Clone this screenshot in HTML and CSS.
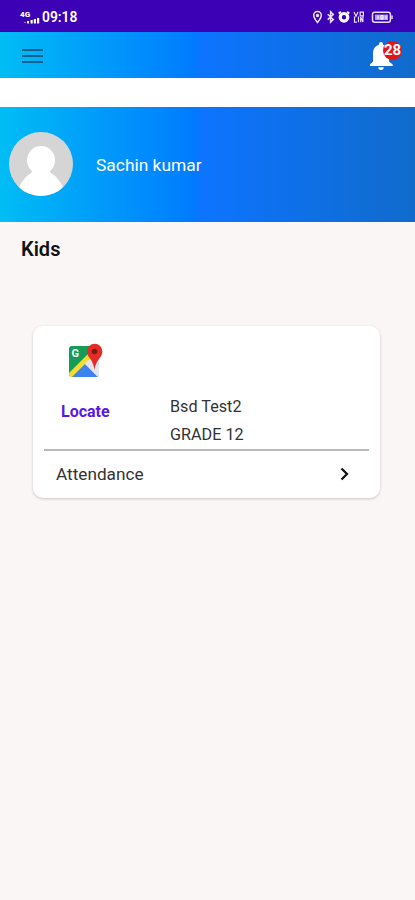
FILE: index.html
```html
<!DOCTYPE html>
<html lang="en">
<head>
  <meta charset="UTF-8" />
  <meta name="viewport" content="width=device-width, initial-scale=1.0"/>
  <title>Kids</title>
  <link rel="stylesheet" href="styles.css">
</head>
<body>

  <!-- Status bar -->
  <div class="status-bar">
    <div class="signal">
      <span class="network">4G</span>
      <svg width="16" height="6" viewBox="0 0 16 6" fill="#fff">
        <rect x="0" y="4" width="2" height="1" opacity=".5"/>
        <rect x="3" y="3" width="2" height="2.5"/>
        <rect x="6.5" y="2" width="2.2" height="3.5"/>
        <rect x="9.8" y="1" width="2.2" height="4.5"/>
        <rect x="13" y="0" width="2.2" height="5.5"/>
      </svg>
    </div>
    <span class="time">09:18</span>
    <svg class="status-icons" width="82" height="14" viewBox="0 0 82 14" fill="none" stroke="#e9defa" stroke-width="1.5">
      <path d="M5.5 12.5C3 9.5 1.7 7.4 1.7 5.3a3.8 3.8 0 0 1 7.6 0c0 2.1-1.3 4.2-3.8 7.2z"/>
      <circle cx="5.5" cy="5.4" r="1" fill="#e9defa"/>
      <path d="M15.7 4.2l5.6 5.2-2.7 2.7V1.7l2.7 2.7-5.6 5.2"/>
      <circle cx="32" cy="7.3" r="3.8" stroke="#fff" stroke-width="3.2"/>
      <path d="M26.7 3.5l2.2-1.8M37.3 3.5l-2.2-1.8" stroke="#fff" stroke-width="2"/>
      <path d="M42 2l2 4.3L46 2M48.2 2.2h3.2v3.6h-3.2zM42.5 6.5v5.7h2.4M46.5 6.5v5.7M48.7 12.2V7l2.2 5V6.5" stroke-width="1.2"/>
      <rect x="60.5" y="2.3" width="17.9" height="10" rx="2.2"/>
      <rect x="63" y="4.6" width="13" height="5.4" fill="#b6a0e5" stroke="none"/>
      <path d="M66 5.5v3.6M69 5.5v3.6h2v-3.6zM74 5.5v3.6" stroke="#fff" stroke-width="1"/>
      <path d="M80 5.5v3.6" stroke-width="1.5"/>
    </svg>
  </div>

  <!-- Toolbar -->
  <header class="toolbar">
    <button class="menu" aria-label="Menu"><i></i><i></i><i></i></button>
    <div class="bell">
      <svg width="26" height="31" viewBox="0 0 26 31" fill="#fff">
        <path d="M1 26v-1.5l3-3v-8c0-4.6 2.4-7.7 6-8.7v-.9a2 2 0 0 1 4 0v.9c3.6 1 6 4.1 6 8.7v8l3.7 3V26z"/>
        <path d="M9.3 27.2h5.4a2.7 2.7 0 0 1-5.4 0z"/>
      </svg>
      <span class="badge">28</span>
    </div>
  </header>

  <!-- Profile -->
  <section class="profile">
    <svg class="avatar" width="64" height="64" viewBox="0 0 64 64">
      <clipPath id="face"><circle cx="32" cy="32" r="32"/></clipPath>
      <g clip-path="url(#face)">
        <rect width="64" height="64" fill="#d5d5d5"/>
        <ellipse cx="32" cy="28.3" rx="14" ry="14.2" fill="#fff"/>
        <path d="M23 38c1 3-3.5 4-6.500 7.500-2.500 3-4.500 5.500-6 8.500V64h43V54c-1.500-3-3.500-5.500-6-8.500C44.500 42 40 41 41 38z" fill="#fff"/>
      </g>
    </svg>
    <span class="name">Sachin kumar</span>
  </section>

  <main>
    <h1>Kids</h1>

    <div class="card">
      <div class="kid">
        <div class="locate">
          <svg width="36" height="36" viewBox="0 0 36 36">
            <clipPath id="tile"><rect x="1" y="4" width="30" height="31" rx="3"/></clipPath>
            <g clip-path="url(#tile)">
              <rect x="1" y="4" width="30" height="31" fill="#169b58"/>
              <path d="M31 4v31H1z" fill="#e3e5eb"/>
              <path d="M3 35l13.500-13.500L30 35z" fill="#3d82ef"/>
              <path d="M1 31L24 8v7L4 35H1z" fill="#f8dc2c"/>
              <path d="M17 21.5l3.5-3.5L31 28v7h-1z" fill="#e3e5eb"/>
            </g>
            <text x="3.5" y="15" class="map-letter">G</text>
            <path d="M26.5 28c-.8-6-2.5-8.7-5-12.2-1.7-2.3-2.5-4.1-2.5-6.3a7.7 7.7 0 0 1 15.4 0c0 2.2-.8 4-2.5 6.3-2.6 3.5-4.6 6.2-5.4 12.2z" fill="#e62b25"/>
            <circle cx="26.5" cy="9.5" r="2.8" fill="#761916"/>
          </svg>
          <a>Locate</a>
        </div>
        <div class="details">
          <p>Bsd Test2</p>
          <p>GRADE 12</p>
        </div>
      </div>
      <div class="row">
        <span>Attendance</span>
        <svg width="12" height="16" viewBox="0 0 12 16" fill="none" stroke="#111" stroke-width="2.2">
          <path d="M2.5 2.5L8 8l-5.5 5.5"/>
        </svg>
      </div>
    </div>
  </main>

</body>
</html>
```
FILE: styles.css
```css
* {
  box-sizing: border-box;
}

body {
  margin: 0;
  min-height: 100vh;
  background: #faf6f5;
  font-family: Roboto, sans-serif;
  color: #333;
}

svg {
  display: block;
}

.status-bar {
  height: 32px;
  padding: 2px 21px 0 20px;
  display: flex;
  align-items: center;
  background: #3c00b5;
  color: #fff;
}

.signal {
  width: 22px;
  display: flex;
  flex-direction: column;
}

.signal svg {
  margin-left: 4px;
}

.network {
  font-size: 8px;
  line-height: 7px;
  font-weight: 900;
}

.time {
  font-size: 13.8px;
  font-weight: 600;
}

.status-icons {
  margin-left: auto;
}

.toolbar,
.profile {
  display: flex;
  align-items: center;
  background: linear-gradient(90deg, #00bdf5 0%, #007bff 47%, #0c74ff 48%, #116bcc 100%);
}

.toolbar {
  height: 75px;
  padding: 0 12px 0 22px;
  justify-content: space-between;
  border-bottom: 29px solid #fff;
}

.menu {
  width: 21px;
  padding: 1px 0 0;
  border: none;
  background: none;
  display: flex;
  flex-direction: column;
  gap: 4px;
}

.menu i {
  height: 2px;
  background: #08608f;
}

.bell {
  position: relative;
  width: 34px;
  height: 31px;
}

.badge {
  position: absolute;
  top: 1px;
  left: 14px;
  width: 19px;
  height: 19px;
  border-radius: 50%;
  background: #e3151b;
  color: #fff;
  font-size: 15px;
  line-height: 19px;
  font-weight: 700;
  text-align: center;
}

.profile {
  height: 115px;
  padding: 0 9px 1px;
  gap: 23px;
}

.name {
  padding-top: 1px;
  color: #fff;
  font-size: 17.4px;
}

main {
  padding: 15px 35px 0 33px;
}

h1 {
  margin: 0 0 65px -12px;
  font-size: 20px;
  line-height: 24px;
  font-weight: 600;
  color: #111;
}

.card {
  height: 172px;
  padding: 0 11px;
  border-radius: 10px;
  background: #fff;
  box-shadow: 0 1px 3px rgba(0, 0, 0, 0.2);
}

.kid {
  height: 125px;
  display: flex;
  border-bottom: 2px solid #b9b9b9;
}

.locate {
  width: 126px;
  padding: 16px 0 0 17px;
}

.locate svg {
  margin-left: 7px;
}

.locate a {
  display: block;
  margin-top: 24px;
  font-size: 16px;
  line-height: 20px;
  font-weight: 700;
  color: #5b16e8;
}

.map-letter {
  font-size: 11px;
  font-weight: 700;
  fill: #fff;
}

.details {
  padding-top: 67px;
}

.details p {
  margin: 0;
  font-size: 16.2px;
  line-height: 28px;
}

.row {
  height: 47px;
  padding: 0 18px 1px 12px;
  display: flex;
  align-items: center;
  justify-content: space-between;
  font-size: 17.2px;
}
```
